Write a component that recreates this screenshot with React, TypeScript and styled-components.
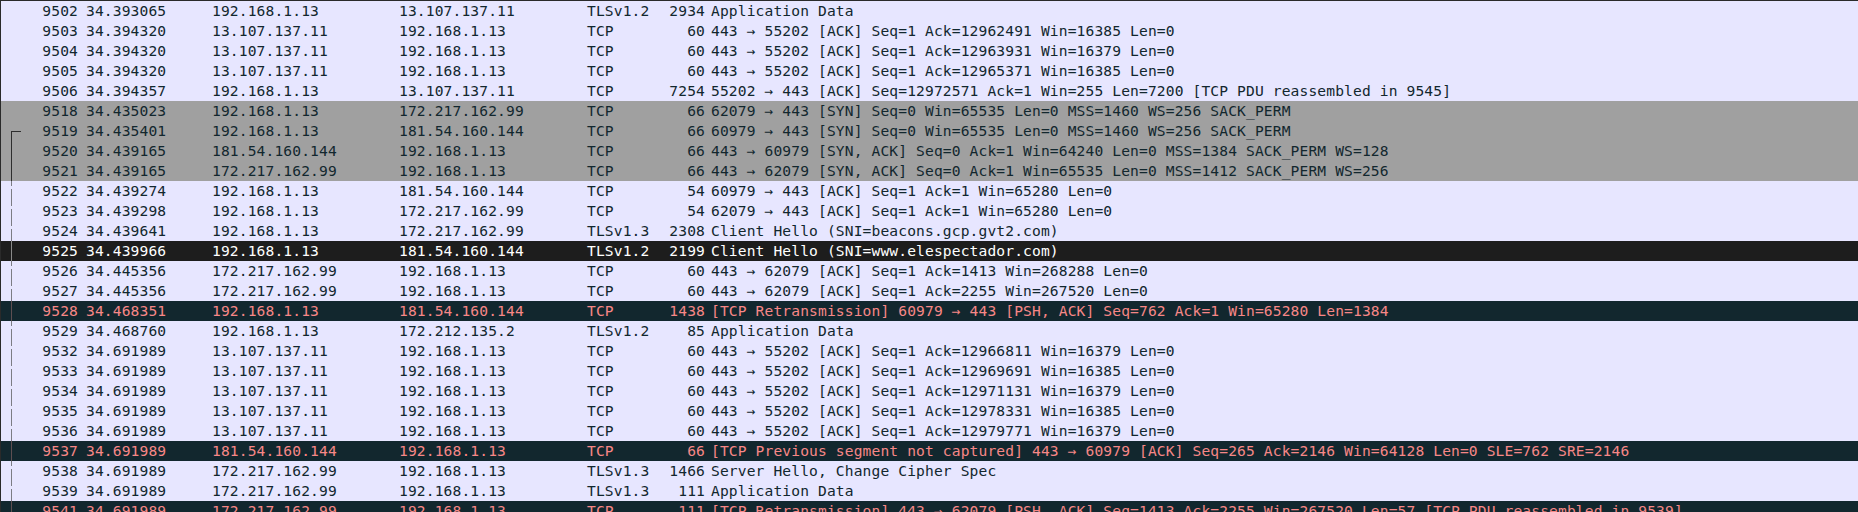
import React from "react";
import styled, { createGlobalStyle, css } from "styled-components";

const Global = createGlobalStyle`
  html, body { margin: 0; padding: 0; background: #e7e6ff; }
  body { overflow: hidden; }
`;

type Kind = "tcp" | "syn" | "sel" | "bad";
type Rel = "none" | "start" | "mid";

interface Pkt {
  no: string;
  time: string;
  src: string;
  dst: string;
  proto: string;
  len: string;
  info: string;
  kind: Kind;
  rel: Rel;
}

const palette: Record<Kind, { bg: string; fg: string; line: string }> = {
  tcp: { bg: "#e7e6ff", fg: "#12272e", line: "#7c7c84" },
  syn: { bg: "#a0a0a0", fg: "#12272e", line: "#2e2e2e" },
  sel: { bg: "#1d1d1d", fg: "#ffffff", line: "#8a8a8a" },
  bad: { bg: "#12272e", fg: "#f78787", line: "#5e4f52" },
};

const Table = styled.div`
  border-top: 1px solid #2a2a2a;
  border-left: 1px solid #2a2a2a;
  width: 1857px;
  height: 511px;
  overflow: hidden;
  background: #e7e6ff;
  font-family: "DejaVu Sans Mono", "Liberation Mono", monospace;
  font-size: 14.6px;
  letter-spacing: 0.13px;
`;

const Row = styled.div<{ $kind: Kind }>`
  display: grid;
  grid-template-columns: 81px 126px 187px 188px 80px 45px 1fr;
  height: 20px;
  line-height: 20px;
  white-space: nowrap;
  background: ${(p) => palette[p.$kind].bg};
  color: ${(p) => palette[p.$kind].fg};
`;

const Cell = styled.div<{ $right?: boolean }>`
  overflow: hidden;
  padding: ${(p) => (p.$right ? "0 3px 0 0" : "0 0 0 4px")};
  text-align: ${(p) => (p.$right ? "right" : "left")};
`;

const NumCell = styled(Cell)`
  position: relative;
  padding-right: 4px;
`;

const InfoCell = styled.div`
  overflow: hidden;
  padding-left: 3px;
`;

const Indicator = styled.span<{ $rel: Rel; $kind: Kind }>`
  position: absolute;
  left: 10px;
  width: 1px;
  ${(p) =>
    p.$rel === "start"
      ? css`
          top: 10px;
          bottom: 0;
          background: ${palette[p.$kind].line};
          &::after {
            content: "";
            position: absolute;
            top: 0;
            left: 0;
            width: 10px;
            height: 1px;
            background: ${palette[p.$kind].line};
          }
        `
      : css`
          top: 0;
          bottom: 0;
          background: ${p.$kind === "tcp"
            ? `linear-gradient(to bottom, ${palette[p.$kind].line} 0 5px, transparent 5px 8px, ${palette[p.$kind].line} 8px 100%)`
            : palette[p.$kind].line};
        `}
`;

const raw: [string, string, string, string, string, string, string, Kind][] = [
  ["9502", "34.393065", "192.168.1.13", "13.107.137.11", "TLSv1.2", "2934", "Application Data", "tcp"],
  ["9503", "34.394320", "13.107.137.11", "192.168.1.13", "TCP", "60", "443 → 55202 [ACK] Seq=1 Ack=12962491 Win=16385 Len=0", "tcp"],
  ["9504", "34.394320", "13.107.137.11", "192.168.1.13", "TCP", "60", "443 → 55202 [ACK] Seq=1 Ack=12963931 Win=16379 Len=0", "tcp"],
  ["9505", "34.394320", "13.107.137.11", "192.168.1.13", "TCP", "60", "443 → 55202 [ACK] Seq=1 Ack=12965371 Win=16385 Len=0", "tcp"],
  ["9506", "34.394357", "192.168.1.13", "13.107.137.11", "TCP", "7254", "55202 → 443 [ACK] Seq=12972571 Ack=1 Win=255 Len=7200 [TCP PDU reassembled in 9545]", "tcp"],
  ["9518", "34.435023", "192.168.1.13", "172.217.162.99", "TCP", "66", "62079 → 443 [SYN] Seq=0 Win=65535 Len=0 MSS=1460 WS=256 SACK_PERM", "syn"],
  ["9519", "34.435401", "192.168.1.13", "181.54.160.144", "TCP", "66", "60979 → 443 [SYN] Seq=0 Win=65535 Len=0 MSS=1460 WS=256 SACK_PERM", "syn"],
  ["9520", "34.439165", "181.54.160.144", "192.168.1.13", "TCP", "66", "443 → 60979 [SYN, ACK] Seq=0 Ack=1 Win=64240 Len=0 MSS=1384 SACK_PERM WS=128", "syn"],
  ["9521", "34.439165", "172.217.162.99", "192.168.1.13", "TCP", "66", "443 → 62079 [SYN, ACK] Seq=0 Ack=1 Win=65535 Len=0 MSS=1412 SACK_PERM WS=256", "syn"],
  ["9522", "34.439274", "192.168.1.13", "181.54.160.144", "TCP", "54", "60979 → 443 [ACK] Seq=1 Ack=1 Win=65280 Len=0", "tcp"],
  ["9523", "34.439298", "192.168.1.13", "172.217.162.99", "TCP", "54", "62079 → 443 [ACK] Seq=1 Ack=1 Win=65280 Len=0", "tcp"],
  ["9524", "34.439641", "192.168.1.13", "172.217.162.99", "TLSv1.3", "2308", "Client Hello (SNI=beacons.gcp.gvt2.com)", "tcp"],
  ["9525", "34.439966", "192.168.1.13", "181.54.160.144", "TLSv1.2", "2199", "Client Hello (SNI=www.elespectador.com)", "sel"],
  ["9526", "34.445356", "172.217.162.99", "192.168.1.13", "TCP", "60", "443 → 62079 [ACK] Seq=1 Ack=1413 Win=268288 Len=0", "tcp"],
  ["9527", "34.445356", "172.217.162.99", "192.168.1.13", "TCP", "60", "443 → 62079 [ACK] Seq=1 Ack=2255 Win=267520 Len=0", "tcp"],
  ["9528", "34.468351", "192.168.1.13", "181.54.160.144", "TCP", "1438", "[TCP Retransmission] 60979 → 443 [PSH, ACK] Seq=762 Ack=1 Win=65280 Len=1384", "bad"],
  ["9529", "34.468760", "192.168.1.13", "172.212.135.2", "TLSv1.2", "85", "Application Data", "tcp"],
  ["9532", "34.691989", "13.107.137.11", "192.168.1.13", "TCP", "60", "443 → 55202 [ACK] Seq=1 Ack=12966811 Win=16379 Len=0", "tcp"],
  ["9533", "34.691989", "13.107.137.11", "192.168.1.13", "TCP", "60", "443 → 55202 [ACK] Seq=1 Ack=12969691 Win=16385 Len=0", "tcp"],
  ["9534", "34.691989", "13.107.137.11", "192.168.1.13", "TCP", "60", "443 → 55202 [ACK] Seq=1 Ack=12971131 Win=16379 Len=0", "tcp"],
  ["9535", "34.691989", "13.107.137.11", "192.168.1.13", "TCP", "60", "443 → 55202 [ACK] Seq=1 Ack=12978331 Win=16385 Len=0", "tcp"],
  ["9536", "34.691989", "13.107.137.11", "192.168.1.13", "TCP", "60", "443 → 55202 [ACK] Seq=1 Ack=12979771 Win=16379 Len=0", "tcp"],
  ["9537", "34.691989", "181.54.160.144", "192.168.1.13", "TCP", "66", "[TCP Previous segment not captured] 443 → 60979 [ACK] Seq=265 Ack=2146 Win=64128 Len=0 SLE=762 SRE=2146", "bad"],
  ["9538", "34.691989", "172.217.162.99", "192.168.1.13", "TLSv1.3", "1466", "Server Hello, Change Cipher Spec", "tcp"],
  ["9539", "34.691989", "172.217.162.99", "192.168.1.13", "TLSv1.3", "111", "Application Data", "tcp"],
  ["9541", "34.691989", "172.217.162.99", "192.168.1.13", "TCP", "111", "[TCP Retransmission] 443 → 62079 [PSH, ACK] Seq=1413 Ack=2255 Win=267520 Len=57 [TCP PDU reassembled in 9539]", "bad"],
];

const packets: Pkt[] = raw.map(([no, time, src, dst, proto, len, info, kind], i) => ({
  no,
  time,
  src,
  dst,
  proto,
  len,
  info,
  kind,
  rel: i === 6 ? "start" : i > 6 ? "mid" : "none",
}));

export default function App() {
  return (
    <>
      <Global />
      <Table>
        {packets.map((p) => (
          <Row key={p.no} $kind={p.kind}>
            <NumCell $right>
              {p.rel !== "none" && <Indicator $rel={p.rel} $kind={p.kind} />}
              {p.no}
            </NumCell>
            <Cell>{p.time}</Cell>
            <Cell>{p.src}</Cell>
            <Cell>{p.dst}</Cell>
            <Cell>{p.proto}</Cell>
            <Cell $right>{p.len}</Cell>
            <InfoCell>{p.info}</InfoCell>
          </Row>
        ))}
      </Table>
    </>
  );
}
